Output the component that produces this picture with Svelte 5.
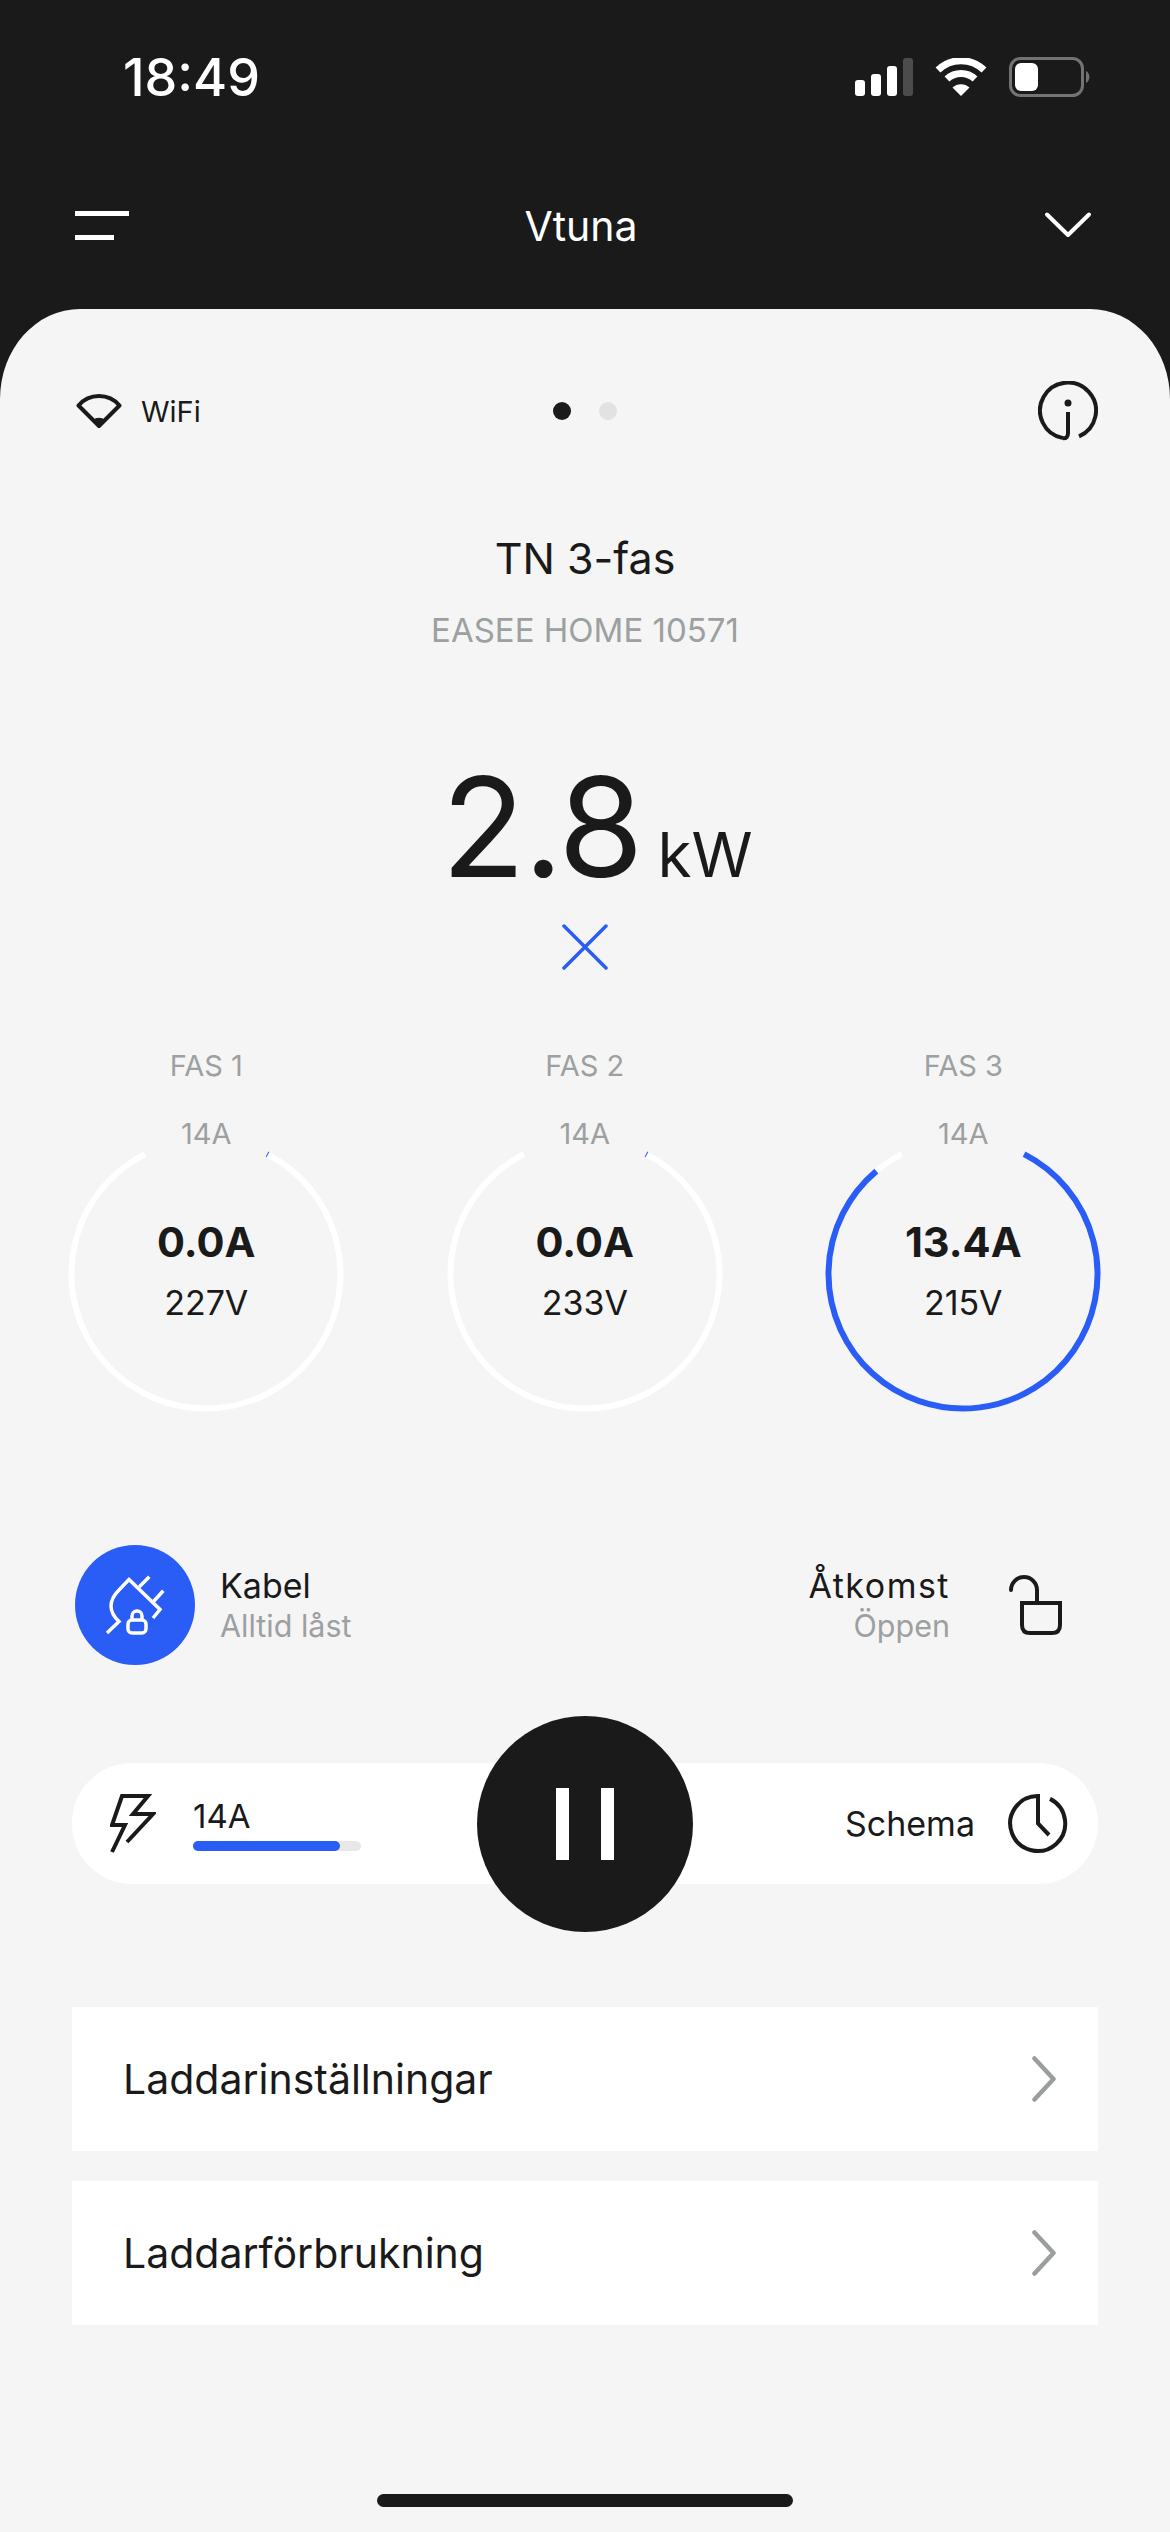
<script>
  const phases = [
    { name: 'FAS 1', max: '14A', current: '0.0A', volt: '227V', value: 0 },
    { name: 'FAS 2', max: '14A', current: '0.0A', volt: '233V', value: 0 },
    { name: 'FAS 3', max: '14A', current: '13.4A', volt: '215V', value: 13.4 },
  ];
  const R = 134.5;
  const GAP_DEG = 27;

  function point(deg) {
    const a = (deg * Math.PI) / 180;
    return [150 + R * Math.sin(a), 150 - R * Math.cos(a)];
  }

  function arc(from, to) {
    const [x1, y1] = point(from);
    const [x2, y2] = point(to);
    const large = to - from > 180 ? 1 : 0;
    return `M${x1} ${y1}A${R} ${R} 0 ${large} 1 ${x2} ${y2}`;
  }

  // an idle phase still shows a hairline of blue where the arc starts
  function valueEnd(value) {
    return GAP_DEG + (Math.max(value, 0.02) / 14) * (360 - GAP_DEG * 2);
  }

  const rows = ['Laddarinställningar', 'Laddarförbrukning'];
</script>

<div class="screen">
  <header class="top">
    <div class="status">
      <span class="time">18:49</span>
      <div class="status-icons">
        <svg width="58" height="38" viewBox="0 0 58 38">
          <rect x="0" y="22" width="10" height="16" rx="3" fill="#fff" />
          <rect x="16" y="16" width="10" height="22" rx="3" fill="#fff" />
          <rect x="32" y="8" width="10" height="30" rx="3" fill="#fff" />
          <rect x="48" y="0" width="10" height="38" rx="3" fill="#4c4c4c" />
        </svg>
        <svg width="52" height="38" viewBox="0 0 52 38">
          <path d="M3 12a33 33 0 0 1 46 0" fill="none" stroke="#fff" stroke-width="7" />
          <path d="M12 21a20.500 20.500 0 0 1 28 0" fill="none" stroke="#fff" stroke-width="7" />
          <path d="M17.500 29.500a12.500 12.500 0 0 1 17 0L26 38z" fill="#fff" />
        </svg>
        <svg width="82" height="40" viewBox="0 0 82 40">
          <rect x="1.500" y="1.500" width="72" height="37" rx="10" fill="none" stroke="#737373" stroke-width="3" />
          <rect x="6" y="6" width="23" height="28" rx="6" fill="#fff" />
          <path d="M77 14a7 7 0 0 1 0 12z" fill="#737373" />
        </svg>
      </div>
    </div>
    <div class="nav">
      <svg width="54" height="29" viewBox="0 0 54 29">
        <rect x="0" y="0" width="54" height="5" fill="#fff" />
        <rect x="0" y="24" width="39" height="5" fill="#fff" />
      </svg>
      <span class="site">Vtuna</span>
      <svg width="48" height="28" viewBox="0 0 48 28">
        <path d="M3 3.500L24 24L45 3.500" fill="none" stroke="#fff" stroke-width="4" stroke-linecap="round" stroke-linejoin="round" />
      </svg>
    </div>
  </header>

  <main class="card">
    <div class="card-top">
      <div class="conn">
        <svg width="46" height="36" viewBox="0 0 46 36">
          <path d="M2.500 12.500a27 27 0 0 1 41 0L23 33z" fill="none" stroke="#1a1a1a" stroke-width="4" stroke-linejoin="round" />
          <path d="M17 27.500a9 9 0 0 1 12 0L23 34z" fill="#1a1a1a" stroke="#1a1a1a" stroke-width="1" />
        </svg>
        <span>WiFi</span>
      </div>
      <div class="dots"><i class="on"></i><i></i></div>
      <svg class="info" width="60" height="60" viewBox="0 0 60 60">
        <path d="M25 57.100A28 28 0 1 1 41 55.300" fill="none" stroke="#1a1a1a" stroke-width="4" />
        <path d="M30 31v21q0 5.500-5 5.300" fill="none" stroke="#1a1a1a" stroke-width="4" />
        <circle cx="30" cy="22" r="3.500" fill="#1a1a1a" />
      </svg>
    </div>

    <h1>TN 3-fas</h1>
    <p class="serial">EASEE HOME 10571</p>

    <div class="power"><span class="num">2.8</span><span class="unit">kW</span></div>
    <svg class="cross" width="46" height="46" viewBox="0 0 46 46">
      <path d="M2 2l42 42M44 2L2 44" fill="none" stroke="#2a5cf6" stroke-width="3.500" stroke-linecap="round" />
    </svg>

    <div class="phases">
      {#each phases as p}
        <div class="phase">
          <span class="phase-name">{p.name}</span>
          <div class="gauge">
            <svg width="300" height="300" viewBox="0 0 300 300">
              <path d={arc(GAP_DEG, 360 - GAP_DEG)} fill="none" stroke="#fff" stroke-width="6" />
              <path d={arc(GAP_DEG, valueEnd(p.value))} fill="none" stroke="#2a5cf6" stroke-width="6" />
            </svg>
            <span class="gauge-max">{p.max}</span>
            <div class="gauge-text">
              <strong>{p.current}</strong>
              <span>{p.volt}</span>
            </div>
          </div>
        </div>
      {/each}
    </div>

    <div class="controls">
      <div class="control">
        <div class="cable">
          <svg width="60" height="60" viewBox="0 0 60 60">
            <path d="M2 58L14 46.500C8 41 6 36 6 31C6 24 10 19 14 15L24 4.500L55 34.500L48 43M34.300 11.700L44.300 1.700M48.300 26.700L58.300 15.700" fill="none" stroke="#fff" stroke-width="3.500" />
            <rect x="23" y="45" width="18" height="13" rx="4" fill="none" stroke="#fff" stroke-width="3.500" />
            <path d="M27 45v-4a5 5 0 0 1 10 0v4" fill="none" stroke="#fff" stroke-width="3.500" />
          </svg>
        </div>
        <div class="label">
          <span class="main">Kabel</span>
          <span class="sub">Alltid låst</span>
        </div>
      </div>
      <div class="control access">
        <div class="label right">
          <span class="main">Åtkomst</span>
          <span class="sub">Öppen</span>
        </div>
        <svg width="56" height="60" viewBox="0 0 56 60">
          <path d="M3 15a13 13 0 0 1 26 0V28M29 28H52V50q0 8-8 8H22q-8 0-8-8V28H29" fill="none" stroke="#1a1a1a" stroke-width="4" stroke-linecap="round" />
        </svg>
      </div>
    </div>

    <div class="pill">
      <div class="pill-left">
        <svg width="46" height="60" viewBox="0 0 46 60">
          <path d="M2 58L15 31H2L12 2H38L23 20H43L17 48" fill="none" stroke="#1a1a1a" stroke-width="4" />
        </svg>
        <div class="amp">
          <span>14A</span>
          <div class="track"><div class="fill"></div></div>
        </div>
      </div>
      <div class="pill-right">
        <span>Schema</span>
        <svg width="60" height="60" viewBox="0 0 60 60">
          <path d="M42 4.900A27.500 27.500 0 1 1 30 2V29.500L41 41" fill="none" stroke="#1a1a1a" stroke-width="4" />
        </svg>
      </div>
      <button class="pause" aria-label="Paus"><i></i><i></i></button>
    </div>

    <div class="list">
      {#each rows as row}
        <div class="row">
          <span>{row}</span>
          <svg width="24" height="46" viewBox="0 0 24 46">
            <path d="M2.500 2.500L21.500 23L2.500 43.500" fill="none" stroke="#9b9e9f" stroke-width="4.500" stroke-linecap="round" stroke-linejoin="round" />
          </svg>
        </div>
      {/each}
    </div>

    <div class="home"></div>
  </main>
</div>

<style>
  :global(body) {
    margin: 0;
    background: #1a1a1a;
  }
  .screen {
    width: 1170px;
    height: 2532px;
    display: flex;
    flex-direction: column;
    background: #1a1a1a;
    color: #1a1a1a;
    font-family: Inter, "Noto Sans", sans-serif;
    overflow: hidden;
  }
  .top {
    height: 309px;
    flex: none;
    color: #fff;
  }
  .status {
    display: flex;
    justify-content: space-between;
    align-items: center;
    padding: 46px 79px 0 123px;
    height: 62px;
  }
  .time {
    font-size: 52px;
    font-weight: 500;
  }
  .status-icons {
    display: flex;
    align-items: center;
    gap: 22px;
  }
  .nav {
    display: flex;
    justify-content: space-between;
    align-items: center;
    padding: 0 78px 0 75px;
    margin-top: 102px;
    height: 30px;
  }
  .site {
    font-size: 41px;
    margin: 2px 11px 0 0;
  }
  .card {
    flex: 1;
    display: flex;
    flex-direction: column;
    align-items: center;
    background: #f5f5f5;
    border-radius: 80px 80px 0 0 / 90px 90px 0 0;
  }
  .card-top {
    align-self: stretch;
    display: grid;
    grid-template-columns: 1fr auto 1fr;
    align-items: center;
    padding: 72px 72px 0;
  }
  .conn {
    display: flex;
    align-items: center;
    gap: 19px;
    padding-left: 4px;
    font-size: 29px;
  }
  .dots {
    display: flex;
    gap: 28px;
  }
  .dots i {
    width: 18px;
    height: 18px;
    border-radius: 50%;
    background: #e2e2e2;
  }
  .dots i.on {
    background: #1a1a1a;
  }
  .info {
    justify-self: end;
  }
  h1 {
    margin: 92px 0 0;
    font-size: 43px;
    line-height: 50px;
    font-weight: 400;
  }
  .serial {
    margin: 27px 0 0;
    font-size: 33px;
    line-height: 40px;
    color: #9da0a1;
  }
  .power {
    display: flex;
    align-items: baseline;
    gap: 16px;
    margin: 112px 0 0 24px;
    line-height: 130px;
    height: 130px;
  }
  .num {
    font-size: 138px;
    letter-spacing: -2px;
  }
  .unit {
    font-size: 62px;
  }
  .cross {
    margin-top: 32px;
  }
  .phases {
    align-self: stretch;
    display: grid;
    grid-template-columns: repeat(3, 378.500px);
    padding: 0 0 0 17px;
    margin-top: 78px;
  }
  .phase {
    display: flex;
    flex-direction: column;
    align-items: center;
  }
  .phase-name {
    font-size: 29px;
    line-height: 36px;
    color: #9da0a1;
  }
  .gauge {
    position: relative;
    width: 300px;
    height: 300px;
    margin-top: 40px;
  }
  .gauge-max {
    position: absolute;
    top: -8px;
    left: 0;
    right: 0;
    text-align: center;
    font-size: 29px;
    line-height: 36px;
    color: #9da0a1;
  }
  .gauge-text {
    position: absolute;
    left: 0;
    right: 0;
    top: 93px;
    display: flex;
    flex-direction: column;
    align-items: center;
    gap: 14px;
  }
  .gauge-text strong {
    font-size: 41.500px;
    line-height: 50px;
    font-weight: 700;
  }
  .gauge-text span {
    font-size: 34px;
    line-height: 44px;
  }
  .controls {
    align-self: stretch;
    display: flex;
    justify-content: space-between;
    align-items: center;
    padding: 0 106px 0 75px;
    margin-top: 121px;
    height: 120px;
  }
  .control {
    display: flex;
    align-items: center;
    gap: 25px;
  }
  .control.access {
    gap: 58px;
  }
  .cable {
    width: 120px;
    height: 120px;
    border-radius: 50%;
    background: #2a5cf6;
    display: flex;
    align-items: center;
    justify-content: center;
  }
  .label {
    display: flex;
    flex-direction: column;
  }
  .label.right {
    align-items: flex-end;
  }
  .label.right .main {
    letter-spacing: 1.500px;
  }
  .main {
    font-size: 34px;
    line-height: 42px;
  }
  .sub {
    font-size: 30.500px;
    line-height: 38px;
    color: #9da0a1;
  }
  .pill {
    position: relative;
    align-self: stretch;
    margin: 98px 72px 0;
    height: 121px;
    display: flex;
    justify-content: space-between;
    align-items: center;
    background: #fff;
    border-radius: 60px;
    padding: 0 30px 0 38px;
  }
  .pill-left, .pill-right {
    display: flex;
    align-items: center;
  }
  .pill-left {
    gap: 37px;
  }
  .pill-right {
    gap: 33px;
    font-size: 34px;
  }
  .amp {
    display: flex;
    flex-direction: column;
    font-size: 33px;
    line-height: 40px;
    gap: 5px;
  }
  .track {
    width: 168px;
    height: 10px;
    border-radius: 5px;
    background: #e8e8e8;
  }
  .fill {
    width: 147px;
    height: 100%;
    border-radius: 5px;
    background: #2a5cf6;
  }
  .pause {
    position: absolute;
    left: 405px;
    top: -47px;
    width: 216px;
    height: 216px;
    border: none;
    padding: 0;
    border-radius: 50%;
    background: #1a1a1a;
    display: flex;
    align-items: center;
    justify-content: center;
    gap: 32px;
  }
  .pause i {
    width: 13px;
    height: 72px;
    background: #fff;
  }
  .list {
    align-self: stretch;
    display: flex;
    flex-direction: column;
    gap: 30px;
    margin: 123px 72px 0;
  }
  .row {
    height: 144px;
    display: flex;
    justify-content: space-between;
    align-items: center;
    background: #fff;
    padding: 0 42px 0 51px;
    font-size: 41px;
  }
  .home {
    width: 416px;
    height: 13px;
    border-radius: 7px;
    background: #1a1a1a;
    margin-top: 169px;
  }
</style>
